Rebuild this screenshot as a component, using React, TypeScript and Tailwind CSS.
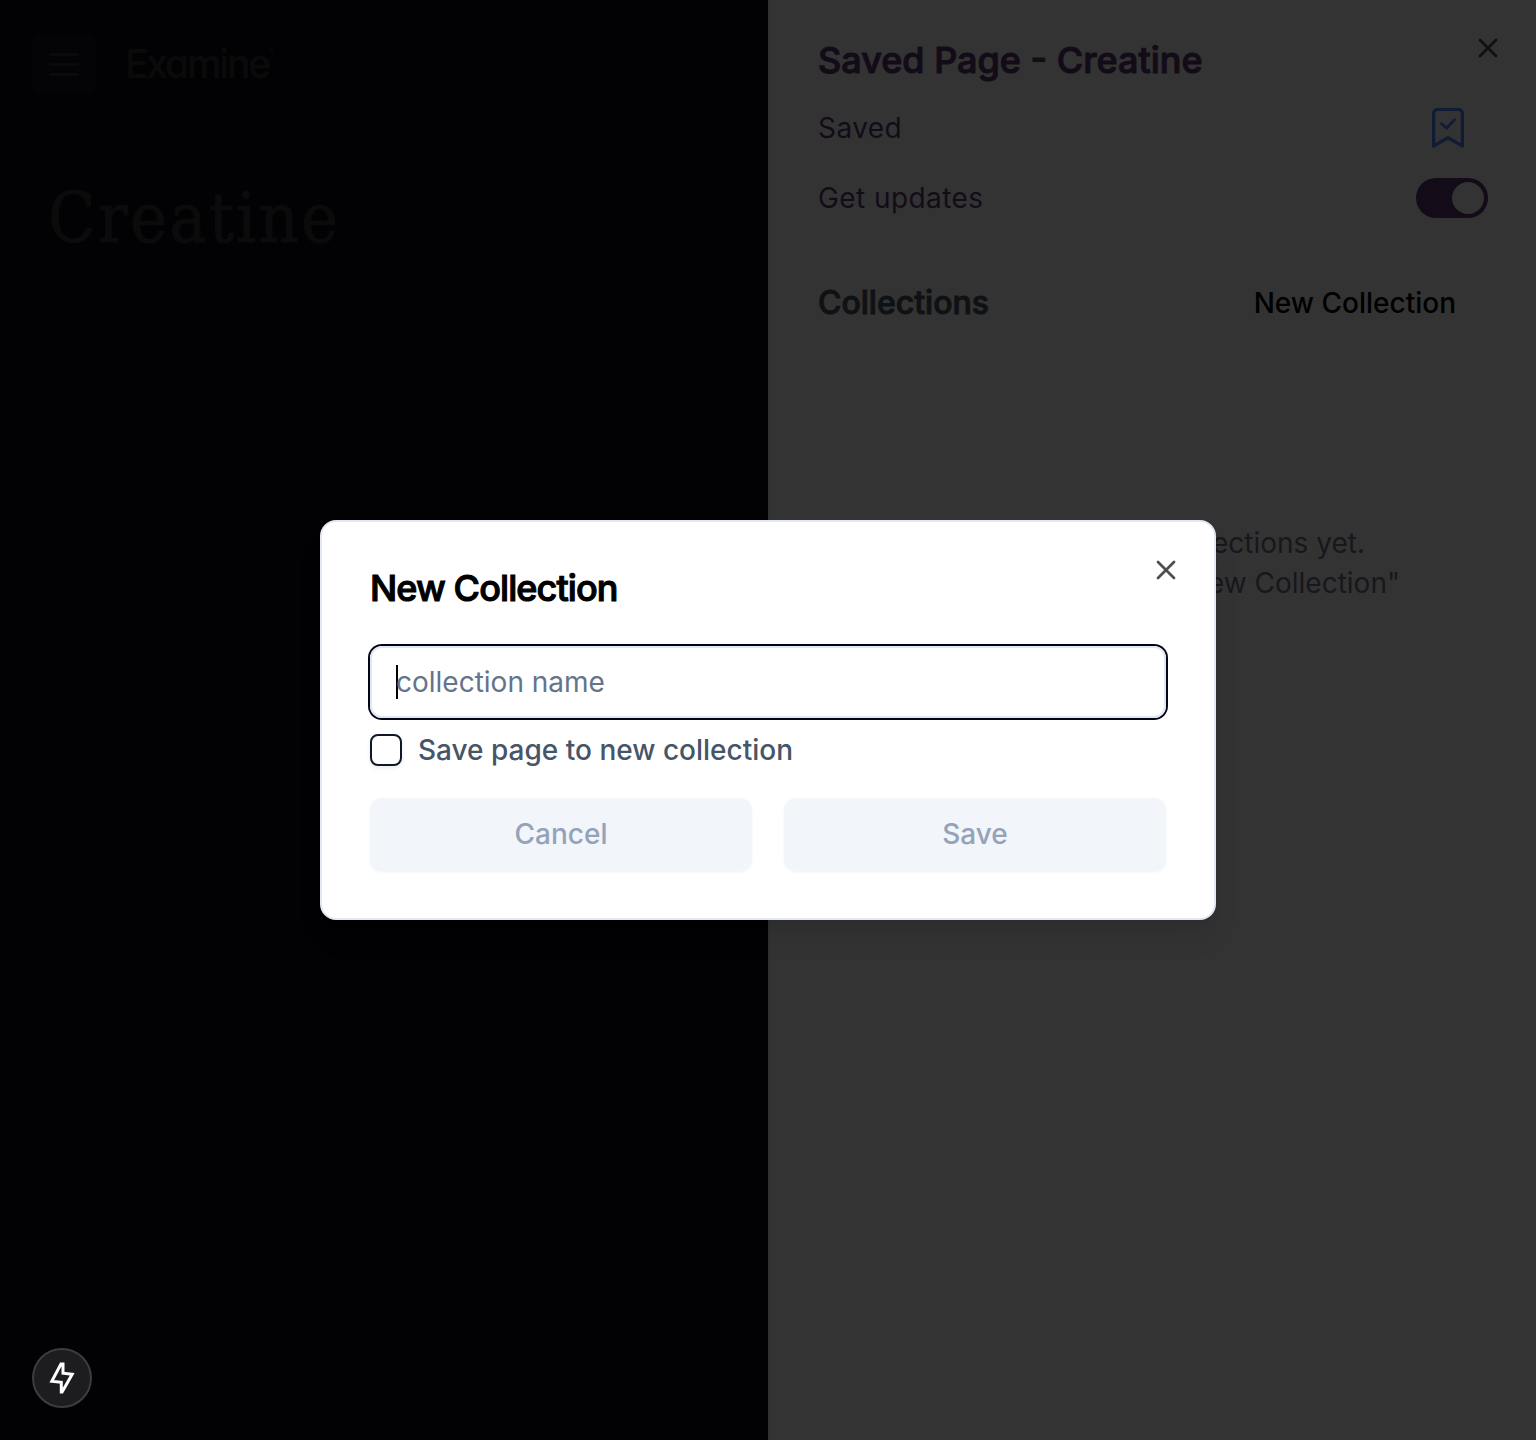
import { X } from "lucide-react";

function BookmarkCheck() {
  return (
    <svg width="32" height="40" viewBox="0 0 32 40" fill="none" stroke="#111b35" strokeWidth="3.200" strokeLinecap="round" strokeLinejoin="round">
      <path d="M1.600 38V5.500a4 4 0 0 1 4-4h20.800a4 4 0 0 1 4 4V38L16 29.700z" />
      <path d="m9.500 15.800 5 4.400 8-8.500" strokeWidth="2.800" />
    </svg>
  );
}

function MainPage() {
  return (
    <main className="h-full w-1/2 bg-[#020103]">
      <header className="flex h-32 items-center pl-8">
        <div className="flex h-[60px] w-16 items-center justify-center rounded-lg bg-[#040406]">
          <div className="flex w-[30px] flex-col gap-[7px]">
            <div className="h-[3px] rounded bg-[#0a0a0b]" />
            <div className="h-[3px] rounded bg-[#0a0a0b]" />
            <div className="h-[3px] rounded bg-[#0a0a0b]" />
          </div>
        </div>
        <div className="ml-[29px] flex text-[#0a0a0a]">
          <span className="text-[39px] leading-[48px] font-medium tracking-[-2.2px] [-webkit-text-stroke:0.5px_#0a0a0a] [font-feature-settings:'cv11']">Examine</span>
          <span className="mt-1 text-[7px] leading-4">®</span>
        </div>
      </header>
      <h1 className="mt-[42px] pl-12 font-['DejaVu_Serif',serif] text-[69px] leading-[96px] tracking-[2.5px] text-[#0b0b0b] [-webkit-text-stroke:1.2px_#0b0b0b] [font-stretch:condensed]">Creatine</h1>
    </main>
  );
}

function SavedPanel() {
  return (
    <aside className="h-full w-1/2 border-l-2 border-[#2f3032] bg-[#333333] pr-12 pl-12">
      <div className="relative flex h-[92px] items-center pt-[27px]">
        <h2 className="text-[36px] leading-[56px] font-medium tracking-[0px] text-[#130c18] [-webkit-text-stroke:1.1px_#130c18]">Saved Page - Creatine</h2>
        <X className="absolute top-8 -right-4 size-8 text-[#101010]" strokeWidth={2} />
      </div>
      <div className="mt-3 flex h-12 items-center justify-between pr-6 text-[28px] tracking-[0.45px] text-[#130c18]">
        <span>Saved</span>
        <BookmarkCheck />
      </div>
      <div className="mt-[26px] flex h-10 items-center justify-between text-[28px] tracking-[0.42px] text-[#130c18]">
        <span>Get updates</span>
        <div className="flex h-10 w-[72px] items-center justify-end rounded-full bg-[#130c18] pr-1">
          <div className="size-8 rounded-full bg-[#333333]" />
        </div>
      </div>
      <div className="mt-[61px] flex h-12 items-center justify-between pr-8">
        <h3 className="text-[32px] leading-12 font-medium tracking-[0px] text-[#0f1214] [-webkit-text-stroke:1px_#0f1214]">Collections</h3>
        <span className="text-[28px] font-medium text-black">New Collection</span>
      </div>
      <div className="mt-[196px] text-right text-[28px] leading-10 text-[#16181c]">
        <p className="pr-[123px]">You have no collections yet.</p>
        <p className="pr-[88px]">Click "New Collection"</p>
      </div>
    </aside>
  );
}

function NewCollectionDialog() {
  return (
    <div className="relative flex h-[400px] w-[896px] flex-col rounded-2xl border-2 border-[#e2e8f0] bg-white px-12 pt-12 shadow-[0_20px_30px_-6px_rgba(0,0,0,0.1),0_8px_12px_-8px_rgba(0,0,0,0.1)]">
      <h2 className="h-9 text-[36px] leading-9 font-medium tracking-[-0.9px] text-black [-webkit-text-stroke:1.1px_#000]">New Collection</h2>
      <X className="absolute top-8 right-8 size-8 text-[#4d4d4d]" strokeWidth={2} />
      <div className="mt-10 flex h-[72px] shrink-0 items-center rounded-xl border-2 border-[#e2e8f0] px-6 text-[28px] text-[#64748b] ring-2 ring-[#020617]">
        <span className="-mr-0.5 h-[34px] w-0.5 bg-black" />
        <span>collection name</span>
      </div>
      <label className="mt-4 flex h-8 shrink-0 items-center gap-4 text-[28px] font-medium text-[#475569]">
        <span className="size-8 rounded-lg border-2 border-[#0f172a] bg-white shadow-[0_2px_4px_rgba(0,0,0,0.08)]" />
        Save page to new collection
      </label>
      <div className="mt-8 grid h-[73px] shrink-0 grid-cols-2 gap-8 text-[28px] font-medium text-[#94a3b8]">
        <button className="rounded-xl bg-[#f2f5fa] pb-px shadow-[0_1px_3px_rgba(0,0,0,0.05)]">Cancel</button>
        <button className="rounded-xl bg-[#f2f5fa] pb-px shadow-[0_1px_3px_rgba(0,0,0,0.05)]">Save</button>
      </div>
    </div>
  );
}

export default function App() {
  return (
    <div className="relative flex h-[1440px] w-[1536px] overflow-hidden font-['Inter',sans-serif]">
      <MainPage />
      <SavedPanel />
      <div className="absolute inset-0 flex items-center justify-center">
        <NewCollectionDialog />
      </div>
      <div className="absolute bottom-8 left-8 flex size-[60px] items-center justify-center rounded-full border-2 border-[#3d3d3f] bg-[#1d1d1f]">
        <svg width="28" height="34" viewBox="0 0 28 34" fill="none" stroke="#fff" strokeWidth="3">
          <path d="M13 3 3.800 20.200 13.300 21.300V31h.8L24.200 13.300 15 12.200V3z" />
        </svg>
      </div>
    </div>
  );
}
